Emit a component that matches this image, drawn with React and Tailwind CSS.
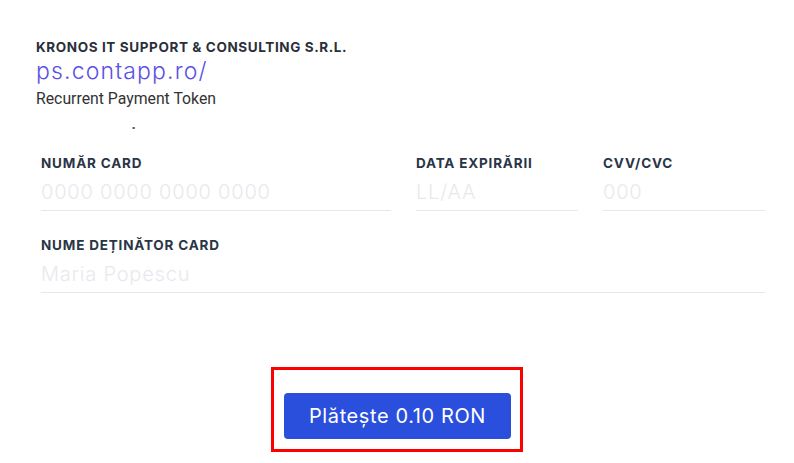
import React from "react";

function Field({ label, placeholder, className = "" }) {
  return (
    <div className={"flex shrink-0 flex-col " + className}>
      <label className="text-[13.5px] font-bold leading-4 text-[#2a3547] tracking-[0.06em]">{label}</label>
      <input
        className="mt-[10px] h-[30px] pb-[8px] border-b border-[#e6e8ec] text-[20px] font-light tracking-[0.04em] text-[#333] placeholder:text-[#e8e9ee] outline-none"
        placeholder={placeholder}
      />
    </div>
  );
}

export default function App() {
  return (
    <div className="w-[794px] h-[463px] bg-white overflow-hidden font-['Inter',sans-serif]">
      <div className="pl-[36px] pt-[40px]">
        <div className="text-[13.5px] font-bold leading-[15px] text-[#2b2f3a] tracking-[0.045em]">
          KRONOS IT SUPPORT &amp; CONSULTING S.R.L.
        </div>
        <div className="mt-[3px] text-[23px] font-light leading-[26px] tracking-[0.05em] text-[#5a50e6]">ps.contapp.ro/</div>
        <div className="mt-[6px] text-[15.8px] leading-[18px] text-[#333] font-['Roboto',sans-serif]">Recurrent Payment Token</div>
        <div className="mt-[19px] ml-[96px] flex h-[2px] w-[3px]">
          <span className="w-[1px] bg-[#f0a050]" />
          <span className="w-[2px] bg-[#5070c0]" />
        </div>
      </div>

      <div className="pl-[41px] pt-[26px]">
        <div className="flex gap-[25px]">
          <Field label="NUMĂR CARD" placeholder="0000 0000 0000 0000" className="w-[350px]" />
          <Field label="DATA EXPIRĂRII" placeholder="LL/AA" className="w-[162px]" />
          <Field label="CVV/CVC" placeholder="000" className="w-[162px]" />
        </div>
        <Field label="NUME DEȚINĂTOR CARD" placeholder="Maria Popescu" className="mt-[26px] w-[724px]" />
      </div>

      <div className="mt-[74px] flex justify-center">
        <div className="border-[3px] border-[#ff0000] pl-[10px] pr-[9px] pt-[23px] pb-[10px]">
          <button className="h-[46px] w-[227px] rounded-[4px] bg-[#2a4fdc] text-[20px] tracking-[0.03em] text-white">
            Plătește 0.10 RON
          </button>
        </div>
      </div>
    </div>
  );
}
